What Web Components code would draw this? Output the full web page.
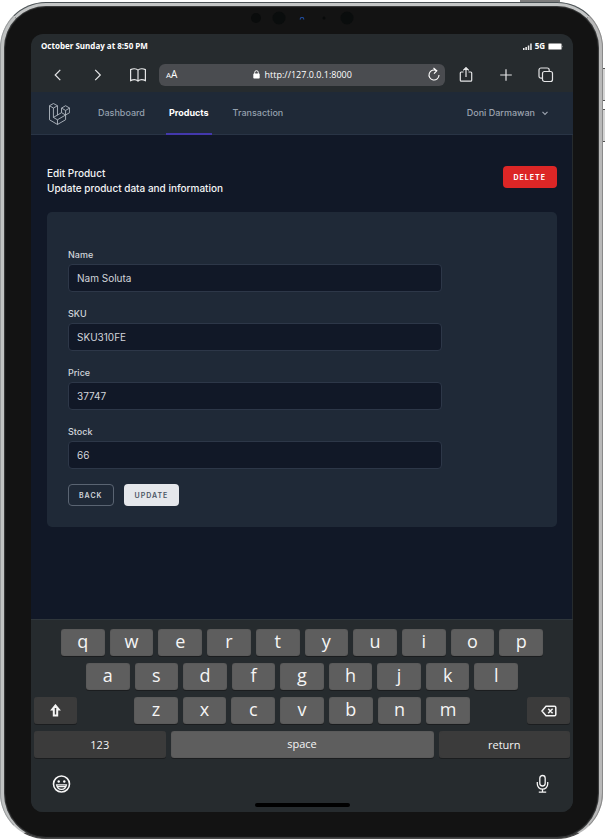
<!DOCTYPE html>
<html lang="en">
<head>
<meta charset="utf-8">
<meta name="viewport" content="width=device-width, initial-scale=1">
<title>Edit Product</title>
<style>
  body { margin: 0; background: #fff; font-family: Inter, "Liberation Sans", sans-serif; overflow-x: hidden; }
</style>
</head>
<body>
<tablet-frame>
  <status-bar slot="screen"></status-bar>
  <browser-bar slot="screen" url="http://127.0.0.1:8000"></browser-bar>
  <app-nav slot="screen" user="Doni Darmawan">
    <nav-item label="Dashboard"></nav-item>
    <nav-item label="Products" active></nav-item>
    <nav-item label="Transaction"></nav-item>
  </app-nav>
  <edit-page slot="screen">
    <span slot="title">Edit Product</span>
    <span slot="subtitle">Update product data and information</span>
    <ui-button slot="action" kind="danger">Delete</ui-button>
    <text-field label="Name" value="Nam Soluta"></text-field>
    <text-field label="SKU" value="SKU310FE"></text-field>
    <text-field label="Price" value="37747"></text-field>
    <text-field label="Stock" value="66"></text-field>
    <ui-button slot="buttons" kind="outline">Back</ui-button>
    <ui-button slot="buttons" kind="light">Update</ui-button>
  </edit-page>
  <touch-keyboard slot="screen"></touch-keyboard>
</tablet-frame>

<script>
const define = (name, render) => customElements.define(name, class extends HTMLElement {
  connectedCallback() {
    if (this.shadowRoot) return;
    const t = document.createElement('template');
    t.innerHTML = render(this);
    this.attachShadow({ mode: 'open' }).append(t.content.cloneNode(true));
  }
});

define('tablet-frame', () => `
<style>
  :host { display: block; position: relative; box-sizing: border-box; min-height: 100vh; padding: 2px 2px 0 0; }
  .body { position: relative; display: flex; box-sizing: border-box; min-height: calc(100vh - 2px); padding: 28px 26px 26px 27px;
    border: 4px solid; border-color: #c4c6c6 #b9b9b9 #4a4a4a #c0c2c2; border-bottom-width: 1px; border-radius: 46px; background: #131313;
    box-shadow: inset 0 0 1px 1px #3c3e3f; }
  .body::before { content: ""; position: absolute; inset: -4px -4px -1px; border: 1px solid #4c5356; border-left-color: #9a9d9e; border-right-color: #8a8a8a; border-bottom-color: transparent; border-radius: 46px; }
  .screen { flex: 1; min-width: 0; display: flex; flex-direction: column; border-radius: 12px; background: #262b2e; overflow: hidden; position: relative; }
  .cams { position: absolute; top: 5px; left: 0; right: 0; display: flex; justify-content: center; align-items: center; gap: 16px; }
  .power { position: absolute; top: 0; right: 45px; width: 40px; height: 2px; background: #7d7d7d; }
  .side { position: absolute; right: 0; width: 2px; height: 33px; background: #d4d4d4; border: solid #555; border-width: 1px 0; box-sizing: border-box; }
</style>
<div class="power"></div>
<div class="side" style="top:68px"></div><div class="side" style="top:109px"></div>
<div class="body">
  <div class="cams"><svg width="104" height="14" viewBox="0 0 104 14">
    <circle cx="6" cy="7" r="5" fill="#0a0c0c"/><circle cx="29" cy="7" r="6.5" fill="#0a0d0d"/>
    <path d="M50 8.5l1-2 2 0 1 2" fill="none" stroke="#1f4a98" stroke-width="1.2"/>
    <circle cx="74" cy="7" r="1.5" fill="#080a0a"/><circle cx="97" cy="7" r="6.5" fill="#0a0d0d"/></svg></div>
  <div class="screen"><slot name="screen"></slot></div>
</div>`);

define('status-bar', () => `
<style>
  :host { display: flex; justify-content: space-between; align-items: center; height: 24px; padding: 0 9px 0 10px; color: #fff;
    font: 700 8px/24px "Open Sans", "Noto Sans", sans-serif; }
  .right { display: flex; align-items: center; gap: 3px; }
</style>
<span>October Sunday at 8:50 PM</span>
<span class="right">
  <svg width="9" height="7" viewBox="0 0 9 7" fill="#eee"><path d="M0 5h1.5v2H0zM2.4 4h1.5v3H2.4zM4.8 2.5h1.5V7H4.8zM7.2 .5h1.5V7H7.2z"/></svg>
  <span>5G</span>
  <svg width="16" height="7" viewBox="0 0 16 7"><rect x=".4" y=".4" width="13.2" height="6.2" rx="1.2" fill="#fff" stroke="#999" stroke-width=".6"/><path d="M14.5 2.4q1.2 1.1 0 2.2z" fill="#bbb"/></svg>
</span>`);

define('browser-bar', el => `
<style>
  :host { display: flex; align-items: center; justify-content: space-between; height: 33px; padding: 0 17px 1px; color: #e4e5e6;
    font: 9px/22px "Open Sans", "Noto Sans", sans-serif; }
  button { display: flex; padding: 0; border: 0; background: none; color: inherit; font: inherit; }
  svg { display: block; fill: none; stroke: currentColor; stroke-width: 1.2; }
  .side { display: flex; align-items: center; gap: 20px; }
  .url { flex: 1; display: flex; align-items: center; justify-content: space-between; height: 22px; margin: 0 11px; padding: 0 4px 0 7px; box-sizing: border-box; border-radius: 6px; background: #4a4c50; color: #fff; }
  .address { display: flex; align-items: center; gap: 5px; }
  .size { font-size: 10px; }
  small { font-size: 8px; }
</style>
<div class="side">
  <button aria-label="Back"><svg width="20" height="20" viewBox="0 0 20 20"><path d="M12.3 4.8L7.2 10l5.1 5.2"/></svg></button>
  <button aria-label="Forward"><svg width="20" height="20" viewBox="0 0 20 20"><path d="M7.2 4.8l5.1 5.2-5.1 5.2"/></svg></button>
  <button aria-label="Bookmarks"><svg width="20" height="20" viewBox="-1 0 20 20"><path d="M9 5.2C7.4 3.6 4 3.4 1.6 4.6v11C4 14.5 7.4 14.6 9 16.2 10.6 14.6 14 14.5 16.4 15.6v-11C14 3.4 10.6 3.6 9 5.2zv11"/></svg></button>
</div>
<div class="url">
  <button aria-label="Text size"><span class="size"><small>A</small>A</span></button>
  <span class="address">
    <svg width="7" height="9" viewBox="0 0 7 9"><rect x=".3" y="3.6" width="6.4" height="5" rx=".8" fill="#fff" stroke="none"/><path d="M1.7 4V2.500a1.800 1.800 0 0 1 3.600 0V4" stroke-width="1"/></svg>
    <span>${el.getAttribute('url')}</span>
  </span>
  <button aria-label="Reload"><svg width="14" height="16" viewBox="0 0 14 16"><path d="M9.5 3.7A5 5 0 1 0 12 8M6.500 1l3.300 2.700-2.800 3" stroke-width="1.1"/></svg></button>
</div>
<div class="side">
  <button aria-label="Share"><svg width="20" height="20" viewBox="0 0 20 20"><path d="M7.5 7H5.300q-1 0-1 1v7.200q0 1 1 1h9.400q1 0 1-1V8q0-1-1-1h-2.200M10 12V2.700M7.200 5.300L10 2.500l2.800 2.800"/></svg></button>
  <button aria-label="New tab"><svg width="20" height="20" viewBox="0 0 20 20"><path d="M10 4.2v11.600M4.200 10h11.600"/></svg></button>
  <button aria-label="Tabs"><svg width="20" height="20" viewBox="0 0 20 20"><rect x="6.5" y="6.5" width="10" height="10" rx="2"/><path d="M6.5 13.200H5a2 2 0 0 1-2-2V5a2 2 0 0 1 2-2h6.200a2 2 0 0 1 2 2v1.500"/></svg></button>
</div>`);

define('nav-item', el => `
<style>
  :host { display: flex; }
  a { display: flex; align-items: center; padding: 0 3px; border-bottom: 2px solid transparent; color: #94a0ae; text-decoration: none; font-size: 9px; font-weight: 500; }
  a.active { border-color: #4338ad; color: #fff; font-weight: 700; }
</style>
<a href="#" class="${el.hasAttribute('active') ? 'active' : ''}">${el.getAttribute('label')}</a>`);

define('app-nav', el => `
<style>
  :host { display: flex; height: 43px; padding: 0 23px 0 18px; box-sizing: border-box; background: #1f2937; box-shadow: inset 0 -1px #293445; }
  .logo { display: flex; align-items: center; color: #b6bdc6; margin-right: 25px; }
  nav { display: flex; gap: 18px; flex: 1; }
  button { display: flex; align-items: center; gap: 5px; padding: 0 0 2px; border: 0; background: none; color: #9ca3af; font: 500 9px Inter, sans-serif; }
</style>
<a class="logo" href="#" aria-label="Home"><svg width="21" height="22" viewBox="0 0 62 65" fill="none" stroke="currentColor" stroke-width="2.6" stroke-linejoin="round">
  <path d="M1.500 8L13 1.500 25 8 13 15zV49.700L25 63.500 49 49.500V35.500M13 15v27.700l12 6.900v13.900M25 8v27.800M13 42.700L37 28.500M25 49.600l24-14.100M37 15l12-7 12 7-12 7zv13.500l12 7 12-7V15M49 22v13.500"/></svg></a>
<nav><slot></slot></nav>
<button>${el.getAttribute('user')}<svg width="10" height="10" viewBox="0 0 10 10" fill="none" stroke="currentColor" stroke-width="1.2"><path d="M2.5 3.800L5 6.300l2.500-2.500"/></svg></button>`);

define('ui-button', el => `
<style>
  :host { display: flex; }
  button { height: 22px; padding: 0 10px; border: 1px solid transparent; border-radius: 4px; font: 600 7px Inter, sans-serif; letter-spacing: 1px; text-transform: uppercase; }
  .danger { background: #dc2626; color: #fff; font-weight: 700; }
  .outline { background: #1f2937; border-color: #5a6472; color: #d1d5db; }
  .light { background: #e5e7eb; color: #4b5563; }
</style>
<button class="${el.getAttribute('kind')}"><slot></slot></button>`);

define('text-field', el => `
<style>
  :host { display: flex; flex-direction: column; gap: 3px; }
  label { color: #d1d5db; font-size: 9px; line-height: 13px; font-weight: 500; }
  input { height: 28px; width: 100%; box-sizing: border-box; padding: 0 8px; border: 1px solid #2d3748; border-radius: 4px; background: #111827; color: #d1d5db; font: 10px Inter, sans-serif; outline: 0; }
</style>
<label for="field">${el.getAttribute('label')}</label>
<input id="field" type="text" value="${el.getAttribute('value')}">`);

define('edit-page', () => `
<style>
  :host { display: block; flex: 1; padding: 31px 15px 31px 16px; background: #111827; border-right: 1px solid #262b2e; }
  header { display: flex; justify-content: space-between; align-items: flex-start; color: #f3f4f6; font-size: 10px; line-height: 15px; font-weight: 500; }
  h1, p { margin: 0; font: inherit; }
  form { margin-top: 16px; padding: 36px 21px 21px; border-radius: 5px; background: #1f2937; }
  .fields { display: flex; flex-direction: column; gap: 15px; width: 80%; }
  .buttons { display: flex; gap: 10px; margin-top: 15px; }
</style>
<header><div><h1><slot name="title"></slot></h1><p><slot name="subtitle"></slot></p></div><slot name="action"></slot></header>
<form><div class="fields"><slot></slot></div><div class="buttons"><slot name="buttons"></slot></div></form>`);

define('key-cap', el => `
<style>
  :host { display: flex; min-width: 0; }
  button { flex: 1; display: flex; align-items: center; justify-content: center; height: 27px; min-width: 0; padding: 0 0 2px; border: 0; border-radius: 3px; background: #5e5e5e; color: #f5f5f5; box-shadow: 0 1px #1b1d1f, inset 0 0 1px #3d3d3d; font: 18px/25px "Open Sans", "Noto Sans", sans-serif; }
  button.word { font-size: 11px; }
  button.dark { background: #3b3b3b; padding: 0; }
</style>
<button class="${el.className}" aria-label="${el.getAttribute('label') || el.textContent}"><slot></slot></button>`);

const keys = s => [...s].map(k => `<key-cap>${k}</key-cap>`).join('');
define('touch-keyboard', () => `
<style>
  :host { display: block; padding: 9px 3px 5px; background: #262b2e; border-top: 1px solid #2f363b; }
  .rows { display: grid; gap: 7px; }
  .row { display: grid; gap: 5px; grid-auto-flow: column; grid-auto-columns: minmax(0, 1fr); }
  .r1 { padding: 0 27px; }
  .r2 { padding: 0 52px; }
  .r3 { display: grid; grid-template-columns: 43px 1fr 43px; gap: 57px; }
  .r4 { display: grid; grid-template-columns: 1fr 2fr 1fr; gap: 5px; }
  svg { display: block; fill: none; stroke: #f5f5f5; stroke-width: 1.3; }
  .tools { display: flex; justify-content: space-between; padding: 16px 18px 0; }
  .tools button { display: flex; padding: 0; border: 0; background: none; }
  .home { width: 95px; height: 4px; margin: 9px auto 0; border-radius: 2px; background: #000; }
</style>
<div class="rows">
  <div class="row r1">${keys('qwertyuiop')}</div>
  <div class="row r2">${keys('asdfghjkl')}</div>
  <div class="r3">
    <key-cap class="dark" label="Shift"><svg width="11" height="13" viewBox="0 0 11 13"><path d="M5.5 1.500L2.200 5.500h1.600v6h3.400v-6h1.600z" stroke-width="2"/></svg></key-cap>
    <div class="row">${keys('zxcvbnm')}</div>
    <key-cap class="dark" label="Delete"><svg width="16" height="12" viewBox="0 0 16 12"><path d="M5 1.200h8.500q1.300 0 1.300 1.300v7q0 1.300-1.300 1.300H5L1 6zM7.200 3.800l4.400 4.400M11.600 3.800L7.200 8.200" stroke-width="1.5"/></svg></key-cap>
  </div>
  <div class="r4"><key-cap class="dark word">123</key-cap><key-cap class="word">space</key-cap><key-cap class="dark word">return</key-cap></div>
</div>
<div class="tools">
  <button aria-label="Emoji"><svg width="19" height="20" viewBox="0 0 19 20"><circle cx="9.5" cy="10" r="8" stroke-width="1.6"/><circle cx="6.700" cy="7.500" r="1.200" fill="#fff" stroke="none"/><circle cx="12.300" cy="7.500" r="1.200" fill="#fff" stroke="none"/><path d="M4.600 10.800h9.800q-.8 4.500-4.900 4.500t-4.900-4.500zM5.500 12.700h8"/></svg></button>
  <button aria-label="Dictate"><svg width="19" height="20" viewBox="0 0 19 20"><rect x="6.8" y="1.500" width="5.400" height="10.500" rx="2.700"/><path d="M4.300 8v2a5.200 5.200 0 0 0 10.400 0V8M9.500 15.200V18M5.800 18.200h7.400"/></svg></button>
</div>
<div class="home"></div>`);
</script>
</body>
</html>
